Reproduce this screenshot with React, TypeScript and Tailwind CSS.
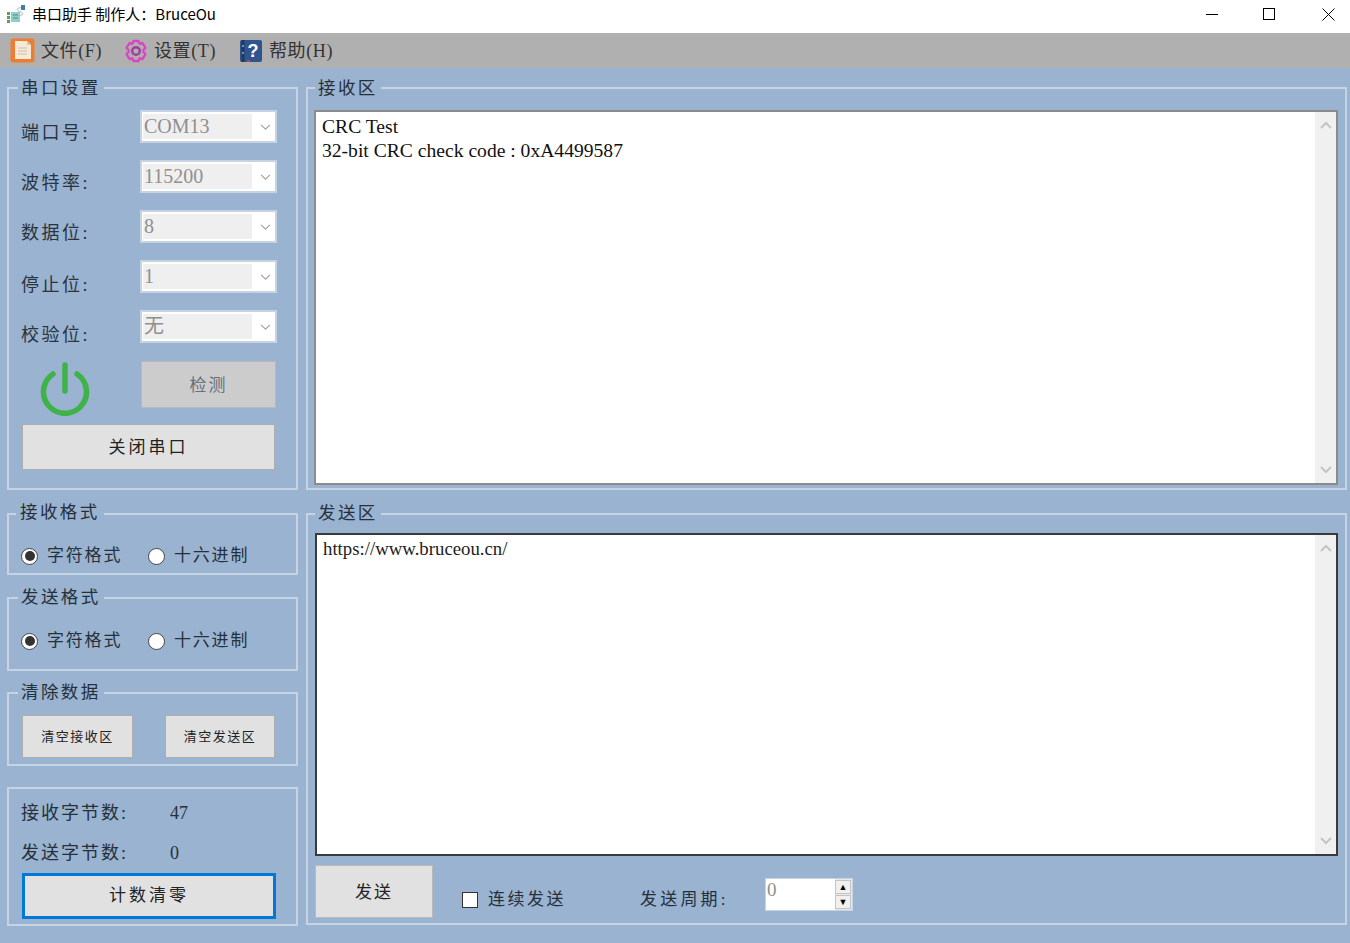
import React from "react";

const cjk = "font-['Liberation_Serif','Noto_Sans_CJK_SC',serif]";

function Group({ title, className, children }: { title?: string; className: string; children: React.ReactNode }) {
  return (
    <section className={`relative border-2 border-[#c6d3e3] ${className}`}>
      {title && (
        <h2 className="absolute left-[9px] top-[-12px] bg-[#99b3d1] px-[3px] text-[17.5px] leading-[22px] tracking-[2.4px] text-[#26303a] whitespace-nowrap">
          {title}
        </h2>
      )}
      {children}
    </section>
  );
}

function Chevron({ up, className, width = 1.4 }: { up?: boolean; className: string; width?: number }) {
  return (
    <svg viewBox="0 0 12 8" className={className} fill="none" stroke="currentColor" strokeWidth={width}>
      <path d={up ? "M1 7 L6 2 L11 7" : "M1 1 L6 6 L11 1"} />
    </svg>
  );
}

function Combo({ label, value, className, labelClass = "mt-[12px]" }: { label: string; value: string; className: string; labelClass?: string }) {
  return (
    <div className={`flex items-start ${className}`}>
      <span className={`-ml-[1px] w-[119px] shrink-0 text-[18px] leading-[22px] tracking-[2.5px] text-[#2a343e] ${labelClass}`}>{label}</span>
      <div className="flex h-[33px] w-[137px] items-center border-2 border-[#c6d3e3] bg-white pl-[1px]">
        <div className="flex h-[25px] w-[109px] items-center bg-[#efefef] pl-[1px] pb-[2px] text-[20px] leading-none text-[#8f8f8f]">{value}</div>
        <Chevron className="ml-[8px] mt-[2px] h-[7px] w-[11px] text-[#a5a5a5]" />
      </div>
    </div>
  );
}

function Btn({ children, className }: { children: React.ReactNode; className: string }) {
  return <button className={`flex items-center justify-center ${className}`}>{children}</button>;
}

function Radio({ checked }: { checked?: boolean }) {
  return (
    <span className="flex h-[17px] w-[17px] items-center justify-center rounded-full border border-[#444] bg-white">
      {checked && <span className="h-[10px] w-[10px] rounded-full bg-[#333]" />}
    </span>
  );
}

function RadioRow({ className }: { className: string }) {
  return (
    <div className={`flex items-center pl-[12px] text-[17px] leading-[22px] tracking-[1.8px] text-[#26303a] ${className}`}>
      <Radio checked />
      <span className="ml-[9px] w-[101px]">字符格式</span>
      <Radio />
      <span className="ml-[9px]">十六进制</span>
    </div>
  );
}

function ScrollTrack() {
  return (
    <div className="flex w-[21px] shrink-0 flex-col items-center justify-between bg-[#f0f0f0] py-[9px]">
      <Chevron up width={2} className="h-[8px] w-[12px] text-[#c4c4c4]" />
      <Chevron width={2} className="h-[8px] w-[12px] text-[#c4c4c4]" />
    </div>
  );
}

function AppIcon() {
  return (
    <svg viewBox="0 0 20 20" className="h-[20px] w-[20px]">
      <path d="M18 4 C10 3 9 6 15 8 C19 10 16 12 12 11" fill="none" stroke="#b5b5b5" strokeWidth="1" />
      <rect x="15" y="1" width="4" height="5" fill="#3f7fa8" />
      <rect x="5" y="8" width="9" height="10" fill="#8fcfc8" />
      <rect x="1" y="8" width="3" height="3" fill="#58a060" />
      <rect x="1" y="12" width="3" height="3" fill="#58a060" />
      <rect x="1" y="16" width="3" height="3" fill="#58a060" />
      <path d="M7 11h5M7 14h5" stroke="#4f8f88" strokeWidth="1" />
    </svg>
  );
}

function DocIcon() {
  return (
    <svg viewBox="0 0 25 25" className="h-[25px] w-[25px]">
      <rect x="0.5" y="0.5" width="24" height="24" rx="3" fill="#ee7d31" />
      <path d="M5 3 H17 L21 7 V21 H5 Z" fill="#f6ead6" />
      <path d="M17 3 V7 H21 Z" fill="#cfc7b8" />
      <path d="M8 10h9M8 13h9M8 16h9" stroke="#c9bfae" strokeWidth="1" />
    </svg>
  );
}

function GearIcon() {
  return (
    <svg viewBox="0 0 24 24" className="h-[24px] w-[24px]" fill="none" stroke="#d946c4" strokeLinejoin="round">
      <path strokeWidth="2.4" d="M9.5 2 H14.5 L15.6 4.8 L18.4 3.9 L21.5 9 L19.4 11 V13 L21.5 15 L18.4 20.1 L15.6 19.2 L14.5 22 H9.5 L8.4 19.2 L5.6 20.1 L2.5 15 L4.6 13 V11 L2.5 9 L5.6 3.9 L8.4 4.8 Z" />
      <circle cx="12" cy="12" r="3.8" strokeWidth="2.4" stroke="#a23b9e" />
    </svg>
  );
}

function HelpIcon() {
  return (
    <svg viewBox="0 0 24 24" className="h-[24px] w-[24px]">
      <rect x="1" y="1" width="22" height="22" rx="2" fill="#2f5590" />
      <path d="M4 1 V23" stroke="#22395f" strokeWidth="3" />
      <path d="M4 6v2M4 13v2" stroke="#d8e2ee" strokeWidth="1" />
      <rect x="8" y="21" width="3" height="2" fill="#c2453c" />
      <text x="14" y="18" textAnchor="middle" fontSize="18" fontWeight="700" fill="#ffffff" fontFamily="Liberation Sans, sans-serif">?</text>
    </svg>
  );
}

function PowerIcon() {
  return (
    <svg viewBox="0 0 50 54" className="h-[54px] w-[50px]" fill="none" stroke="#3fb349" strokeWidth="5.5" strokeLinecap="round">
      <path d="M13 12 A21.5 21.5 0 1 0 37 12" />
      <path d="M25 3 V 29" />
    </svg>
  );
}

function MenuItem({ icon, label, className }: { icon: React.ReactNode; label: string; className: string }) {
  return (
    <div className={`flex items-center ${className}`}>
      {icon}
      <span className="ml-[6px] text-[18px] leading-[22px] tracking-[0.6px] text-[#333]">{label}</span>
    </div>
  );
}

const grayBtn = "border border-[#adadad] bg-[#e1e1e1] text-[#222]";

export default function App() {
  return (
    <div className={`flex h-[943px] w-[1350px] flex-col overflow-hidden bg-[#99b3d1] ${cjk}`}>
      <header className="flex h-[33px] items-center bg-white pb-[5px] pl-[6px] font-['Noto_Sans_CJK_SC','Liberation_Sans',sans-serif] text-[15px] text-black">
        <AppIcon />
        <span className="ml-[6px]">串口助手 制作人：BruceOu</span>
        <div className="ml-auto flex items-center">
          <span className="mr-[45px] h-[1px] w-[12px] bg-black" />
          <span className="mr-[47px] h-[12px] w-[12px] border border-black" />
          <svg viewBox="0 0 13 13" className="mr-[15px] h-[13px] w-[13px]" stroke="black" strokeWidth="1"><path d="M0.5 0.5 L12.5 12.5 M12.5 0.5 L0.5 12.5" /></svg>
        </div>
      </header>
      <nav className="flex h-[35px] items-center bg-[#b0b0b0] pl-[10px]">
        <MenuItem icon={<DocIcon />} label="文件(F)" className="w-[114px]" />
        <MenuItem icon={<GearIcon />} label="设置(T)" className="w-[115px]" />
        <MenuItem icon={<HelpIcon />} label="帮助(H)" className="w-[110px]" />
      </nav>
      <main className="flex pl-[7px] pt-[19px]">
        <div className="flex w-[291px] shrink-0 flex-col">
          <Group title="串口设置" className="h-[403px] pl-[13px] pr-[19px] pt-[21px]">
            <Combo label="端口号:" value="COM13" className="h-[50px]" />
            <Combo label="波特率:" value="115200" className="h-[50px]" />
            <Combo label="数据位:" value="8" className="h-[50px]" />
            <Combo label="停止位:" value="1" className="h-[50px]" labelClass="mt-[14px]" />
            <Combo label="校验位:" value="无" className="h-[50px]" labelClass="mt-[14px]" />
            <div className="flex items-start">
              <div className="ml-[18px] w-[101px] mt-[2px]"><PowerIcon /></div>
              <Btn className="mt-[1px] h-[47px] w-[135px] border border-[#b9b9b9] bg-[#cccccc] pt-[3px] text-[17px] tracking-[2px] text-[#66707a]">检测</Btn>
            </div>
            <Btn className={`mt-[8px] h-[46px] w-[253px] pt-[1px] text-[17px] tracking-[3px] ${grayBtn}`}>关闭串口</Btn>
          </Group>
          <Group title="接收格式" className="mt-[23px] h-[62px] [&>h2]:left-[7px] [&>h2]:top-[-14px] [&>h2]:px-[4px]">
            <RadioRow className="mt-[30px]" />
          </Group>
          <Group title="发送格式" className="mt-[22px] h-[74px] [&>h2]:top-[-13px]">
            <RadioRow className="mt-[31px]" />
          </Group>
          <Group title="清除数据" className="mt-[21px] h-[74px] pl-[13px] pt-[21px] [&>h2]:top-[-13px]">
            <div className="flex">
              <Btn className={`h-[43px] w-[111px] text-[13px] tracking-[1.5px] ${grayBtn}`}>清空接收区</Btn>
              <Btn className={`ml-[32px] h-[43px] w-[110px] text-[13px] tracking-[1.5px] ${grayBtn}`}>清空发送区</Btn>
            </div>
          </Group>
          <Group className="mt-[21px] h-[139px] pl-[12px] pr-[20px] pt-[4px]">
            <div className="flex h-[40px] items-center text-[18px] tracking-[2px] text-[#26303a]">
              <span className="w-[149px]">接收字节数:</span><span className="tracking-normal">47</span>
            </div>
            <div className="flex h-[40px] items-center text-[18px] tracking-[2px] text-[#26303a]">
              <span className="w-[149px]">发送字节数:</span><span className="tracking-normal">0</span>
            </div>
            <Btn className="ml-[1px] h-[46px] w-[254px] border-[3px] border-[#0078d7] bg-[#e1e1e1] text-[17px] tracking-[3px] text-[#222]">计数清零</Btn>
          </Group>
        </div>
        <div className="ml-[8px] flex w-[1041px] shrink-0 flex-col">
          <Group title="接收区" className="flex h-[403px] flex-col pl-[6px] pr-[7px] pt-[21px] [&>h2]:left-[7px]">
            <div className="flex h-[375px] border-2 border-[#8b8b8b] bg-white">
              <div className="flex-1 pl-[6px] pt-[3px] text-[19.6px] leading-[24px] text-[#111]">
                CRC Test<br />32-bit CRC check code : 0xA4499587
              </div>
              <ScrollTrack />
            </div>
          </Group>
          <Group title="发送区" className="mt-[23px] h-[412px] pl-[7px] pr-[7px] pt-[18px] [&>h2]:left-[7px] [&>h2]:top-[-13px]">
            <div className="flex h-[323px] border-2 border-[#3a3a3a] bg-white">
              <div className="flex-1 pl-[6px] pt-[2px] text-[18.8px] leading-[24px] text-[#222]">https://www.bruceou.cn/</div>
              <ScrollTrack />
            </div>
            <div className="mt-[9px] flex items-start">
              <Btn className="h-[53px] w-[118px] border border-[#b9b9b9] bg-[#e1e1e1] pt-[3px] text-[17px] tracking-[2px] text-[#222]">发送</Btn>
              <span className="ml-[29px] mt-[27px] h-[16px] w-[16px] border border-[#333] bg-white" />
              <span className="ml-[10px] mt-[24px] w-[152px] text-[17px] leading-[22px] tracking-[2.5px] text-[#26303a]">连续发送</span>
              <span className="mt-[24px] w-[125px] text-[17px] leading-[22px] tracking-[3.2px] text-[#26303a]">发送周期:</span>
              <div className="mt-[13px] flex h-[33px] w-[88px] border border-[#c6d3e3] bg-white">
                <span className="flex-1 pl-[1px] text-[19px] leading-[22px] text-[#8f8f8f]">0</span>
                <div className="flex w-[17px] flex-col gap-[1px] bg-[#e8e8e8] py-[1px] pr-[1px]">
                  <span className="flex flex-1 items-center justify-center border border-[#c4c4c4] bg-[#f0f0f0] text-[9px] leading-none text-black">▲</span>
                  <span className="flex flex-1 items-center justify-center border border-[#c4c4c4] bg-[#f0f0f0] text-[9px] leading-none text-black">▼</span>
                </div>
              </div>
            </div>
          </Group>
        </div>
      </main>
    </div>
  );
}
